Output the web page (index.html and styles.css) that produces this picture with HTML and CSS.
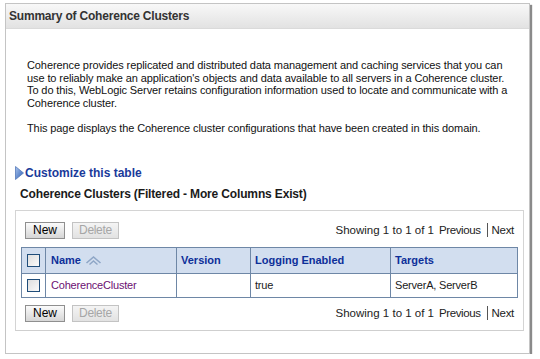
FILE: index.html
```html
<!DOCTYPE html>
<html>
<head>
<meta charset="utf-8">
<link rel="stylesheet" href="styles.css">
</head>
<body>
<div class="panel">
  <div class="panel-head">Summary of Coherence Clusters</div>
  <div class="panel-body">
    <p class="intro">Coherence provides replicated and distributed data management and caching services that you can use to reliably make an application's objects and data available to all servers in a Coherence cluster. To do this, WebLogic Server retains configuration information used to locate and communicate with a Coherence cluster.</p>
    <p class="intro second">This page displays the Coherence cluster configurations that have been created in this domain.</p>
    <div class="customize">
      <svg class="tri" width="9" height="14" viewBox="0 0 9 14"><defs><linearGradient id="tg" x1="0" y1="0" x2="1" y2="1"><stop offset="0" stop-color="#a9c4ee"/><stop offset="1" stop-color="#2c5db3"/></linearGradient></defs><path d="M0.5 0.5 L8.5 7 L0.5 13.5 Z" fill="url(#tg)" stroke="#5579b9" stroke-width="0.8"/></svg>
      <span>Customize this table</span>
    </div>
    <div class="table-title">Coherence Clusters (Filtered - More Columns Exist)</div>
    <div class="table-box">
      <div class="toolbar">
        <div class="btns"><span class="btn">New</span><span class="btn disabled">Delete</span></div>
        <div class="pager">Showing 1 to 1 of 1 <span class="pl">Previous</span><span class="sep"></span><span class="nx">Next</span></div>
      </div>
      <table class="grid">
        <thead>
          <tr>
            <th class="c-chk"><span class="chk"></span></th>
            <th class="c-name">Name <svg class="sort" width="17" height="10" viewBox="0 0 17 10"><path d="M1.5 8 L8.5 2 L15.5 8" fill="none" stroke="#8ea6c6" stroke-width="1.6"/><path d="M4.5 9.5 L8.5 6 L12.5 9.5" fill="none" stroke="#8ea6c6" stroke-width="1.4"/></svg></th>
            <th class="c-ver">Version</th>
            <th class="c-log">Logging Enabled</th>
            <th class="c-tgt">Targets</th>
          </tr>
        </thead>
        <tbody>
          <tr>
            <td class="c-chk"><span class="chk"></span></td>
            <td class="name-link">CoherenceCluster</td>
            <td></td>
            <td>true</td>
            <td>ServerA, ServerB</td>
          </tr>
        </tbody>
      </table>
      <div class="toolbar bottom">
        <div class="btns"><span class="btn">New</span><span class="btn disabled">Delete</span></div>
        <div class="pager">Showing 1 to 1 of 1 <span class="pl">Previous</span><span class="sep"></span><span class="nx">Next</span></div>
      </div>
    </div>
  </div>
</div>
</body>
</html>
```
FILE: styles.css
```css
html, body { margin: 0; padding: 0; background: #fff; }
body {
  font-family: "Liberation Sans", Arial, sans-serif;
  font-size: 11px;
  color: #000;
}
.panel {
  margin: 3px 0 0 5px;
  width: 525px;
  height: 351px;
  border: 1px solid #c4c4c4;
  box-shadow: 2px 2px 1px #8a8a8a;
  box-sizing: border-box;
}
.panel-head {
  height: 24px;
  line-height: 24px;
  padding-left: 3px;
  font-weight: bold;
  font-size: 12px;
  letter-spacing: -0.2px;
  color: #333;
  background: linear-gradient(#f8f8f8, #e2e2e2);
  border-bottom: 1px solid #dadada;
}
.panel-body {
  padding: 30px 0 0 9px;
}
.intro {
  margin: 0 0 0 12px;
  line-height: 12.6px;
  width: 485px;
  letter-spacing: -0.1px;
  color: #111;
}
.intro.second { margin-top: 13px; }
.customize {
  margin-top: 31px;
  display: flex;
  align-items: center;
  gap: 1px;
  font-weight: bold;
  font-size: 12px;
  color: #1a3a9a;
}
.tri { display: block; }
.table-title {
  margin: 7px 0 0 5px;
  font-weight: bold;
  font-size: 12px;
  letter-spacing: -0.15px;
  color: #1a1a1a;
}
.table-box {
  margin-top: 9px;
  width: 509px;
  height: 121px;
  border: 1px solid #d4d4d4;
  border-bottom-color: #cfcfcf;
  box-sizing: border-box;
  padding: 11px 6px 0 5px;
}
.toolbar {
  display: flex;
  justify-content: space-between;
  align-items: center;
  height: 17px;
}
.toolbar.bottom { margin-top: 7px; }
.btns { display: flex; gap: 7px; margin-left: 4px; }
.btn {
  height: 15px;
  line-height: 15px;
  padding: 0 7px;
  font-size: 12px;
  border: 1px solid #8f8f8f;
  background: linear-gradient(#fbfbfb, #d6d6d6);
  color: #000;
}
.btn.disabled {
  padding: 0 6px;
  letter-spacing: -0.3px;
  color: #a6a6a6;
  border-color: #c3c3c3;
  background: linear-gradient(#f4f4f4, #e2e2e2);
}
.pager {
  display: flex;
  align-items: center;
  font-size: 11.5px;
  color: #222;
  padding-right: 3px;
}
.pl { margin-left: 5px; letter-spacing: -0.4px; }
.nx { letter-spacing: -0.3px; }
.sep {
  width: 1px;
  height: 14px;
  background: #555;
  margin: 0 4px 0 6px;
}
.grid {
  margin-top: 8px;
  width: 497px;
  border-collapse: collapse;
  border: 1px solid #53708f;
}
.grid th, .grid td {
  border: 1px solid #6e87a6;
  text-align: left;
  padding: 0 4px;
  font-size: 11px;
}
.grid th {
  height: 25px;
  background: #d2deef;
  color: #0d2f99;
  font-weight: bold;
}
.grid th.c-name { padding-left: 5px; }
.grid td {
  height: 23px;
  color: #1a1a1a;
  letter-spacing: -0.2px;
}
.grid td.name-link { padding-left: 5px; }
.grid .c-chk { width: 17px; padding: 0 3px; text-align: center; }
.c-name { width: 121px; }
.c-ver { width: 65px; }
.c-log { width: 131px; }
.sort { vertical-align: -1px; margin-left: 1px; }
.chk {
  display: inline-block;
  width: 11px;
  height: 11px;
  border: 1px solid #1f4d7a;
  background: linear-gradient(135deg, #dedede, #fafafa);
  vertical-align: middle;
}
.grid .name-link { color: #6b0f72; }
```
